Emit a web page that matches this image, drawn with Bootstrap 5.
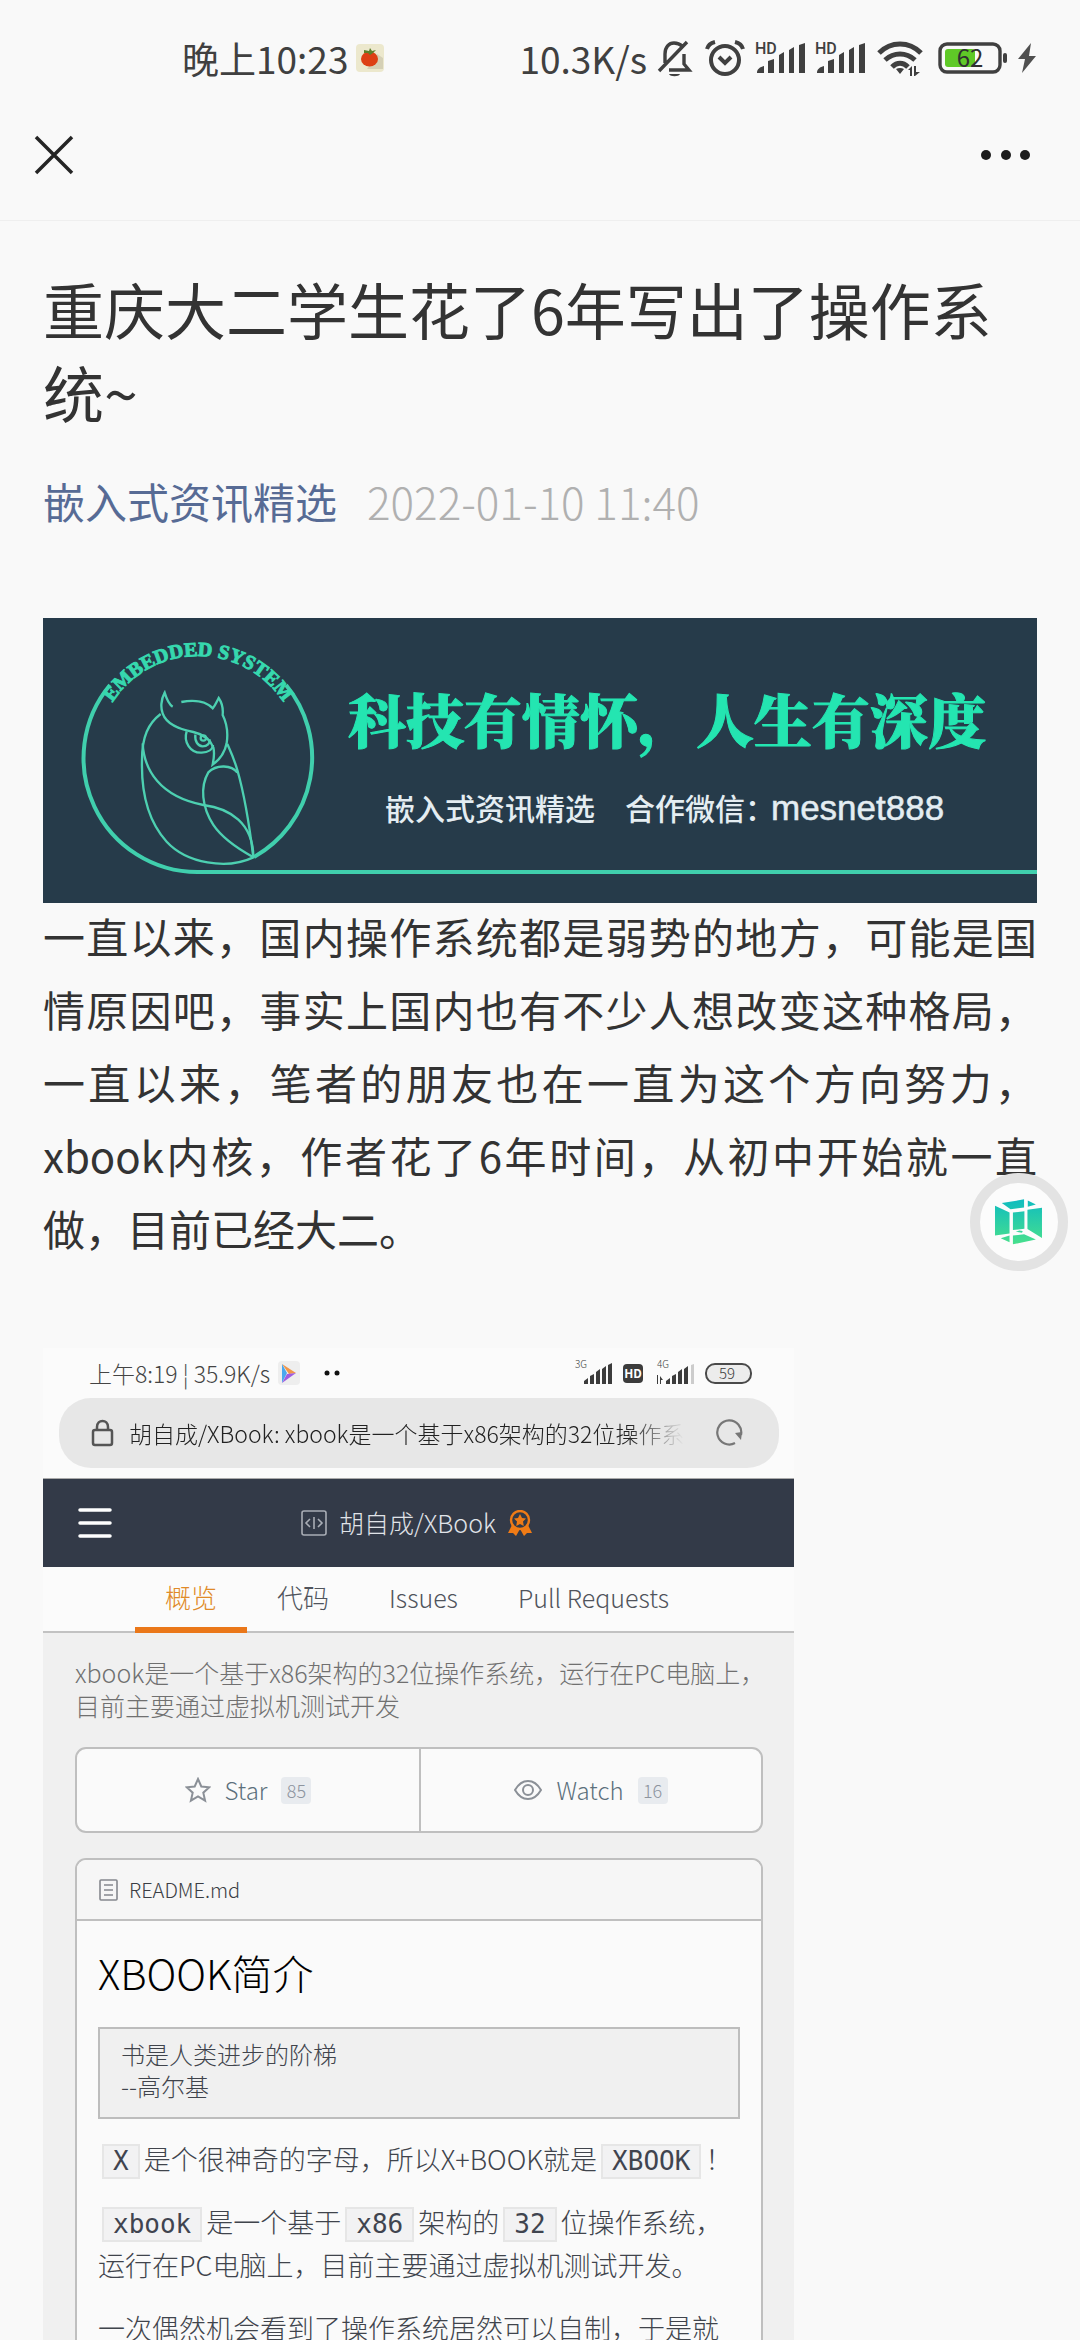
<!DOCTYPE html>
<html lang="zh-CN">
<head>
<meta charset="utf-8">
<meta name="viewport" content="width=device-width, initial-scale=1">
<title>重庆大二学生花了6年写出了操作系统~</title>
<link href="https://cdn.jsdelivr.net/npm/bootstrap@5.3.0/dist/css/bootstrap.min.css" rel="stylesheet">
<style>
  body { background: #f9f9f9; color: #333; font-family: "Noto Sans CJK SC", sans-serif; }
  svg { display: block; flex: none; }
  .phone { height: 100vh; overflow: hidden; }
  .sysbar { height: 90px; padding: 26px 44px 0 182px; font-size: 37px; line-height: 60px; color: #404040; }
  .sysicons { gap: 10px; }
  .titlebar { height: 131px; padding: 0 48px 0 34px; border-bottom: 1px solid #efefef; }
  .iconbtn { background: none; border: 0; padding: 0; }
  .article { padding: 46px 43px 0; }
  .headline { font-size: 61px; line-height: 83px; font-weight: 400; margin: 0 0 38px; }
  .byline { font-size: 42px; line-height: 60px; gap: 30px; margin-bottom: 87px; }
  .byline a { color: #576b95; text-decoration: none; }
  .byline time { color: #b0b0b0; font-weight: 300; font-size: 44px; }
  .story { font-size: 42px; line-height: 73px; text-align: justify; margin: -4px 0 84px; }
  .floater { position: absolute; right: 12px; top: 1173px; width: 98px; height: 98px; border: 10px solid #e3e3e3; border-radius: 50%; background: #fcfcfc; }

  .shot { max-width: 751px; font-weight: 300; background: #fbfbfb; }
  .shot-status { height: 50px; padding: 0 42px 0 46px; font-size: 23px; color: #444; }
  .address { height: 70px; margin: 0 15px 10px 16px; padding: 0 36px 0 32px; border-radius: 32px; background: #e7e7e7; }
  .address-text { font-size: 23px; color: #222; white-space: nowrap; margin: 0 auto 0 15px;
    -webkit-mask-image: linear-gradient(90deg, #000 90%, transparent); mask-image: linear-gradient(90deg, #000 90%, transparent); }
  .repobar { height: 89px; background: #333a48; border-top: 1px solid #aaa; color: #e0e3e8; font-size: 25px; padding: 0 35px; }
  .repotitle { gap: 12px; padding-right: 38px; }
  .tabrow { height: 66px; padding-left: 92px; border-bottom: 2px solid #c2c2c2; font-size: 26px; }
  .tabrow a { color: #50545c; text-decoration: none; line-height: 60px; height: 66px; padding: 0 30px; }
  .tabrow a.on { color: #e08a28; border-bottom: 6px solid #ea7719; }
  .tabrow a.latin { font-size: 25px; }
  .repo { background: #f0f0f0; padding: 23px 31px 0 32px; }
  .about { font-size: 25px; line-height: 33px; color: #707070; white-space: nowrap; margin: 0 0 25px; }
  .panel { border: 2px solid #bfbfbf; border-radius: 11px; background: #fafafa; }
  .actions { height: 86px; margin-bottom: 25px; }
  .actions button { background: none; border: 0; gap: 14px; font-size: 24px; font-weight: 300; color: #5c707c; }
  .actions button + button { border-left: 2px solid #bfbfbf; }
  .tally { background: #e8ebef; color: #8d949e; font-size: 18px; line-height: 27px; width: 30px; border-radius: 4px; }
  .readme { border-bottom: 0; border-radius: 11px 11px 0 0; }
  .readme-head { height: 61px; padding-left: 22px; gap: 11px; font-size: 20px; color: #3a3d44; border-bottom: 2px solid #bfbfbf; background: #f6f6f6; border-radius: 9px 9px 0 0; }
  .readme-body { padding: 21px 21px 0; color: #40444c; }
  .readme-body h2 { font-size: 41px; line-height: 60px; font-weight: 300; color: #000; margin: 0 0 25px; }
  .saying { border: 2px solid #bdbdbd; background: #f0f0f0; font-size: 24px; line-height: 32px; padding: 9px 21px 15px; margin: 0 0 18px; }
  .readme-body p { font-size: 27px; line-height: 43px; margin: 0 0 20px; white-space: nowrap; }
  .readme-body code { font: 26px/31px "DejaVu Sans Mono", monospace; color: #40444f; background: #f2f2f3; border: 2px solid #e6e6e6; padding: 0 9px; margin: 0 4px; display: inline-block; }
</style>
<script src="https://cdn.jsdelivr.net/npm/bootstrap@5.3.0/dist/js/bootstrap.bundle.min.js"></script>
</head>
<body>
<div class="phone position-relative">
  <div class="sysbar d-flex align-items-center justify-content-between">
    <div class="d-flex align-items-center">
      <span>晚上10:23</span>
      <svg class="ms-2" width="28" height="28" viewBox="0 0 28 28"><rect width="28" height="28" rx="4" fill="#ece8cd"/><path d="M11 25h16V14l-6-4z" fill="#d5d0b6"/><ellipse cx="13.500" cy="15" rx="8.500" ry="7.500" fill="#dd3f14"/><path d="M8 6l5 1 1-3 2 3 4-1-3 3-3 2-2-2-4 0z" fill="#5e7f2b"/></svg>
    </div>
    <div class="d-flex align-items-center sysicons">
      <span>10.3K/s</span>
      <svg width="38" height="38" viewBox="0 0 38 38" fill="none" stroke="#404040" stroke-width="3.400"><path d="M2 32L30 3M8 24V15C8 8 12 4 17 4c3 0 6 1 8 3M27 15v10l5 6H12"/><path d="M12 35h11c-1 3-10 3-11 0z" fill="#404040" stroke="none"/></svg>
      <svg width="40" height="38" viewBox="0 0 40 38" fill="none" stroke="#404040" stroke-width="4"><circle cx="20" cy="21" r="14"/><path d="M2 10c1-4 4-6 8-7M38 10c-1-4-4-6-8-7"/><path d="M14 18l6 6 6-6"/></svg>
      <svg width="50" height="38" viewBox="0 0 50 38" fill="#404040"><text x="0" y="15" font-size="16" font-weight="500" font-family="Roboto, sans-serif">HD</text><path d="M2 34c0-4 3-6 7-7v7zM13 34V22l6-2v14zM24 34V16l5-3v21zM34 34V11l5-3v26zM44 34V6l6-2v30z"/></svg>
      <svg width="50" height="38" viewBox="0 0 50 38" fill="#404040"><text x="0" y="15" font-size="16" font-weight="500" font-family="Roboto, sans-serif">HD</text><path d="M2 34c0-4 3-6 7-7v7zM13 34V22l6-2v14zM24 34V16l5-3v21zM34 34V11l5-3v26zM44 34V6l6-2v30z"/></svg>
      <svg width="50" height="38" viewBox="0 0 50 38" fill="none" stroke="#404040" stroke-width="5"><path d="M4 14c12-12 30-12 42 0M10 21c9-8 21-8 30 0M17 28c5-5 11-5 16 0"/><path d="M21 30q4-2 8 0l-4 5zM33 31l4-4v10h-2v-6zM39 27h2v6h4l-5 4h-1z" fill="#404040" stroke="none"/></svg>
      <svg width="73" height="38" viewBox="0 0 73 38"><rect x="5" y="5" width="60" height="28" rx="7" fill="none" stroke="#404040" stroke-width="3.400"/><rect x="10" y="10" width="30" height="18" rx="3" fill="#5fc927"/><rect x="68" y="14" width="4" height="10" rx="2" fill="#404040"/><text x="35" y="28" text-anchor="middle" font-size="24" fill="#303030" font-family="Noto Sans CJK SC, sans-serif">62</text></svg>
      <svg width="18" height="38" viewBox="0 0 18 38"><path d="M13 4L0 20h7L4 34 18 17h-7z" fill="#505050"/></svg>
    </div>
  </div>
  <header class="titlebar d-flex align-items-center justify-content-between">
    <button class="iconbtn" aria-label="关闭"><svg width="40" height="40" viewBox="0 0 40 40" stroke="#252525" stroke-width="3.500"><path d="M2 2l36 36M38 2L2 38"/></svg></button>
    <button class="iconbtn" aria-label="更多"><svg width="52" height="12" viewBox="0 0 52 12" fill="#1c1c1c"><circle cx="6" cy="6" r="5"/><circle cx="26" cy="6" r="5"/><circle cx="45" cy="6" r="5"/></svg></button>
  </header>

  <main class="article">
    <h1 class="headline">重庆大二学生花了6年写出了操作系<br>统~</h1>
    <div class="byline d-flex"><a href="#">嵌入式资讯精选</a><time>2022-01-10 11:40</time></div>

    <svg class="w-100 h-auto" viewBox="0 0 994 285" role="img" aria-label="科技有情怀，人生有深度">
      <rect width="994" height="285" fill="#263b4a"/>
      <g fill="none" stroke="#40cfad" stroke-width="4">
        <path d="M67 67A114 114 0 0 0 155 254H994"/>
        <path d="M243 67A114 114 0 0 1 211 239"/>
      </g>
      <g transform="translate(-3 -8) scale(.33333)" fill="none" stroke="#4dd0b1" stroke-width="7">
        <path d="M398 290C388 284 380 268 374 248C362 270 362 295 368 310C380 345 420 358 460 366C495 374 512 392 520 412C524 428 522 445 518 464C545 445 555 425 560 400C566 360 558 335 548 315C550 295 547 280 536 264C530 275 526 287 518 295C500 275 465 268 424 276"/>
        <path d="M362 312C325 340 306 380 306 450C303 560 330 640 380 695C440 760 560 780 640 742C630 660 615 560 592 480C580 440 570 420 562 402"/>
        <path d="M308 400C312 480 360 560 490 585C570 595 640 640 640 742"/>
        <path d="M592 488C575 465 530 462 505 487C480 530 485 590 520 645C550 690 600 720 640 742"/>
        <path d="M440 364C430 395 450 430 485 428C505 427 518 418 519 405"/>
        <path d="M466 374C464 395 474 408 488 409C502 409 510 400 509 388"/><circle cx="490" cy="384" r="8"/>
      </g>
      <path id="arc" d="M53 140A102 102 0 0 1 257 140" fill="none"/>
      <text font-family="Liberation Serif, serif" font-weight="700" font-size="20" fill="#36d8ae" stroke="#36d8ae" stroke-width="1" text-anchor="middle"><textPath href="#arc" startOffset="50%">EMBEDDED SYSTEM</textPath></text>
      <text x="305" y="125" font-family="Noto Serif CJK SC, Noto Sans CJK SC, sans-serif" font-weight="900" font-size="58" fill="#24e5b1" stroke="#24e5b1" stroke-width="1">科技有情怀，人生有深度</text>
      <g font-family="Noto Sans CJK SC, sans-serif" font-weight="500" font-size="30" fill="#e4edf2">
        <text x="342" y="202">嵌入式资讯精选</text>
        <text x="582" y="202">合作微信：</text>
        <text x="728" y="202" font-family="Liberation Sans, sans-serif" font-size="35" stroke="#e4edf2" stroke-width=".5">mesnet888</text>
      </g>
    </svg>

    <p class="story">一直以来，国内操作系统都是弱势的地方，可能是国情原因吧，事实上国内也有不少人想改变这种格局，一直以来，笔者的朋友也在一直为这个方向努力，xbook内核，作者花了6年时间，从初中开始就一直做，目前已经大二。</p>

    <section class="shot">
      <div class="shot-status d-flex align-items-center">
        <span>上午8:19 ¦ 35.9K/s</span>
        <svg class="ms-2" width="22" height="24" viewBox="0 0 22 24"><rect width="22" height="24" rx="4" fill="#eee"/><path d="M4 3l14 9-7 1z" fill="#f0964a"/><path d="M4 3l5 9-5 10z" fill="#4aa7ee"/><path d="M4 22l5-9 9-1z" fill="#a05ce0"/></svg>
        <svg class="ms-4" width="18" height="6" viewBox="0 0 18 6" fill="#111"><circle cx="3" cy="3" r="2.500"/><circle cx="13" cy="3" r="2.500"/></svg>
        <svg class="ms-auto" width="178" height="34" viewBox="0 -4 178 34" fill="#3c3c3c" font-family="Noto Sans CJK SC, sans-serif">
          <text x="1" y="8" font-size="10">3G</text>
          <path d="M10 24v-3l4-3v6zM16 24v-8l4-2v10zM22 24V12l4-3v15zM28 24V9l4-3v18zM34 24V5l4-2v21z"/>
          <rect x="49" y="4" width="20" height="19" rx="4"/><text x="59" y="18" text-anchor="middle" font-size="12" font-weight="700" fill="#fff">HD</text>
          <text x="83" y="8" font-size="10">4G</text>
          <path d="M80 19l3 5V15h1v9h-1zM86 24v-8l3 4h-2v4zM92 24v-3l4-3v6zM98 24v-8l4-2v10zM104 24V12l4-3v15zM110 24V9l4-3v18z"/><path d="M117 5l3-1v20h-3z" fill="#ccc"/>
          <rect x="132" y="4" width="45" height="19" rx="9" fill="#ececec" stroke="#4a4a4a" stroke-width="2"/><text x="153" y="19" text-anchor="middle" font-size="15">59</text>
        </svg>
      </div>
      <div class="address d-flex align-items-center">
        <svg width="23" height="28" viewBox="0 0 23 28" fill="none" stroke="#555" stroke-width="2.500"><rect x="2" y="11" width="19" height="15" rx="2"/><path d="M6 11V8c0-8 11-8 11 0v3"/></svg>
        <span class="address-text">胡自成/XBook: xbook是一个基于x86架构的32位操作系</span>
        <svg width="28" height="28" viewBox="0 0 28 28"><path d="M20 24A12 12 0 1 1 26 16" fill="none" stroke="#777" stroke-width="2.200"/><path d="M20 14l7-1-1 8z" fill="#777"/></svg>
      </div>
      <div class="repobar d-flex align-items-center">
        <button class="iconbtn" aria-label="菜单"><svg width="34" height="32" viewBox="0 0 34 32" stroke="#fff" stroke-width="3.500" stroke-linecap="round"><path d="M2 3h30M2 16h30M2 29h30"/></svg></button>
        <div class="repotitle d-flex align-items-center justify-content-center flex-grow-1">
          <svg width="26" height="26" viewBox="0 0 26 26" fill="none" stroke="#a9adb5" stroke-width="1.600"><rect x="1" y="1" width="24" height="24" rx="2"/><path d="M9 9l-4 4 4 4M17 9l4 4-4 4M13 7v12"/></svg>
          <span>胡自成/XBook</span>
          <svg width="24" height="26" viewBox="0 0 24 26"><path d="M4 15L0 23l5 0 3 3 4-7 4 7 3-3 5 0-4-8z" fill="#f07b16"/><circle cx="12" cy="10" r="9" fill="#333a48" stroke="#f07b16" stroke-width="2.400"/><path d="M12 4l2 4 4 .5-3 3 .8 4.500L12 14l-3.800 2 .8-4.500-3-3 4-.5z" fill="#f07b16"/></svg>
        </div>
      </div>
      <nav class="tabrow d-flex">
        <a class="on" href="#">概览</a><a href="#">代码</a><a class="latin" href="#">Issues</a><a class="latin" href="#">Pull Requests</a>
      </nav>
      <div class="repo">
        <p class="about">xbook是一个基于x86架构的32位操作系统，运行在PC电脑上，<br>目前主要通过虚拟机测试开发</p>
        <div class="panel actions d-flex">
          <button class="d-flex align-items-center justify-content-center w-50">
            <svg width="26" height="26" viewBox="0 0 26 26" fill="none" stroke="#8b9097" stroke-width="2"><path d="M13 2l3.300 7.500 8 .8-6 5.400 1.800 8L13 19.500 5.900 23.700l1.800-8-6-5.400 8-.8z"/></svg>
            <span>Star</span><span class="tally">85</span>
          </button>
          <button class="d-flex align-items-center justify-content-center w-50">
            <svg width="28" height="22" viewBox="0 0 28 22" fill="none" stroke="#8b9097" stroke-width="2"><path d="M1 11C8-1 20-1 27 11 20 23 8 23 1 11z"/><circle cx="14" cy="11" r="5"/></svg>
            <span>Watch</span><span class="tally">16</span>
          </button>
        </div>
        <div class="panel readme">
          <div class="readme-head d-flex align-items-center">
            <svg width="19" height="22" viewBox="0 0 19 22" fill="none" stroke="#85888e" stroke-width="1.600"><rect x="1" y="1" width="17" height="20" rx="1"/><path d="M5 6h9M5 11h9M5 16h9"/></svg>
            <span>README.md</span>
          </div>
          <div class="readme-body">
            <h2>XBOOK简介</h2>
            <blockquote class="saying">书是人类进步的阶梯<br>--高尔基</blockquote>
            <p><code>X</code>是个很神奇的字母，所以X+BOOK就是<code>XBOOK</code>！</p>
            <p><code>xbook</code>是一个基于<code>x86</code>架构的<code>32</code>位操作系统，<br>运行在PC电脑上，目前主要通过虚拟机测试开发。</p>
            <p>一次偶然机会看到了操作系统居然可以自制，于是就</p>
          </div>
        </div>
      </div>
    </section>
  </main>

  <button class="floater p-0 d-flex align-items-center justify-content-center" aria-label="工具">
    <svg width="50" height="48" viewBox="140 148 148 140"><defs><linearGradient id="teal" gradientUnits="userSpaceOnUse" x1="0" y1="150" x2="0" y2="285"><stop offset="0" stop-color="#0fbcc0"/><stop offset="1" stop-color="#48e08c"/></linearGradient></defs>
      <path fill="url(#teal)" d="M163 162l66-11v24l-40 5zM240 154l24 12-24 7zM143 170l43 20v62l-43 6zM196 190l34-4v52l-34 4zM239 182l43-6v89l-43-26zM205 247l10-4 10 2-2 5zM160 266l26-8v20zM196 258l33-4 35 16-68 14z"/></svg>
  </button>
</div>
</body>
</html>
